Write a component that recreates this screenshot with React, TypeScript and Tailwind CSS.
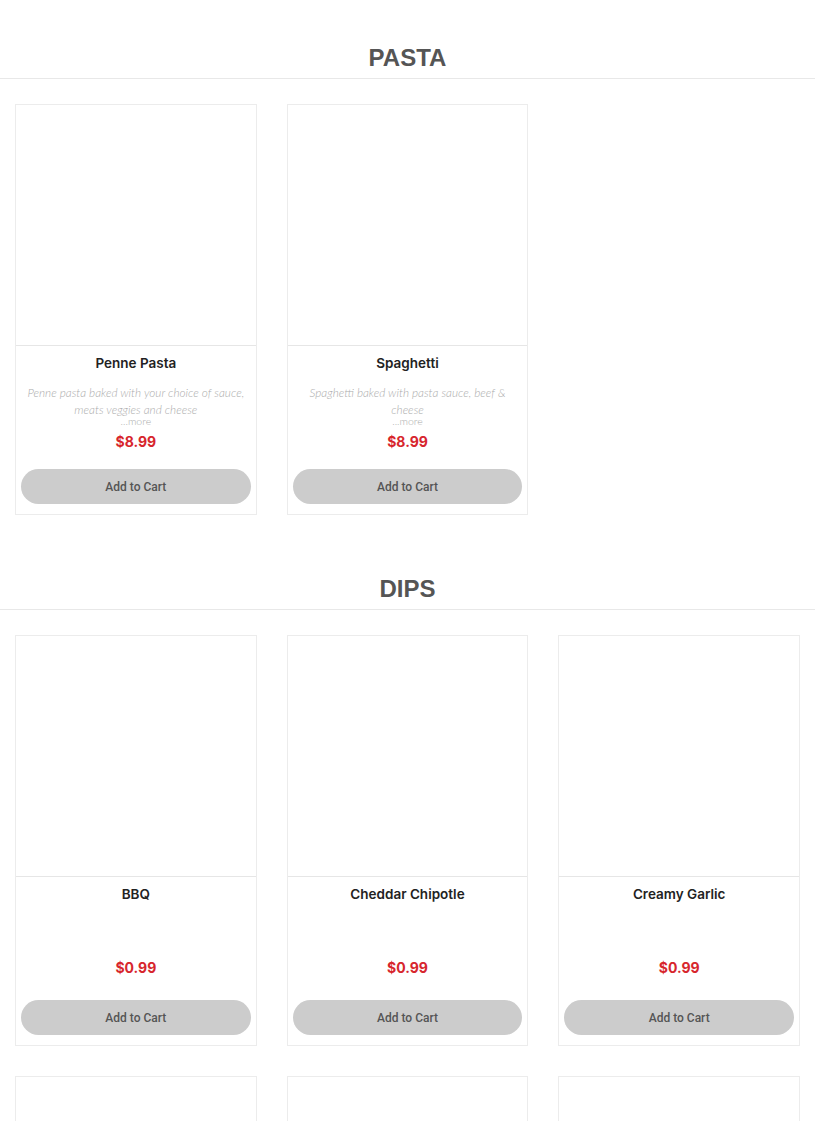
import { FC } from "react";

type Item = {
  name: string;
  price: string;
  description?: string;
};

const pasta: Item[] = [
  {
    name: "Penne Pasta",
    price: "$8.99",
    description: "Penne pasta baked with your choice of sauce, meats veggies and cheese",
  },
  {
    name: "Spaghetti",
    price: "$8.99",
    description: "Spaghetti baked with pasta sauce, beef & cheese",
  },
];

const dips: Item[] = [
  { name: "BBQ", price: "$0.99" },
  { name: "Cheddar Chipotle", price: "$0.99" },
  { name: "Creamy Garlic", price: "$0.99" },
  { name: "", price: "" },
  { name: "", price: "" },
  { name: "", price: "" },
];

const ProductCard: FC<{ item: Item }> = ({ item }) => {
  return (
    <div className="flex h-[411px] flex-col border border-[#ececec] bg-white">
      <div className="h-[241px] border-b border-[#e6e6e6]" />
      <div className="flex flex-1 flex-col items-center px-[5px]">
        <h3 className="mt-[7px] text-center font-['Inter',sans-serif] text-[13.5px] font-semibold leading-[20px] text-[#222]">
          {item.name}
        </h3>
        {item.description ? (
          <div className="flex h-[53px] flex-col items-center px-[5px] pt-[11px] text-center font-['Lato',sans-serif] text-[11.8px] font-light italic leading-[17px] text-[#acacac]">
            <p>{item.description}</p>
            <span className="-mt-[2px] text-[10.5px] not-italic leading-[10px]">...more</span>
          </div>
        ) : (
          <div className="h-[48px]" />
        )}
        <div className="mt-[6px] font-['Inter',sans-serif] text-[14px] font-bold leading-[20px] text-[#d7262d]">
          {item.price}
        </div>
        <button className="mt-auto mb-[10px] h-[35px] w-full rounded-full bg-[#cccccc] font-['Roboto',sans-serif] text-[12px] font-medium text-[#555]">
          Add to Cart
        </button>
      </div>
    </div>
  );
};

const Section: FC<{ title: string; items: Item[] }> = ({ title, items }) => {
  return (
    <section className="pt-[43px]">
      <div className="border-b border-[#e8e8e8] pb-[5px] text-center">
        <h2 className="font-['Liberation_Sans',sans-serif] text-[24px] font-bold leading-[30px] text-[#555]">
          {title}
        </h2>
      </div>
      <div className="grid grid-cols-3 gap-x-[30px] gap-y-[30px] px-[15px] pt-[25px]">
        {items.map((item, i) => (
          <ProductCard key={i} item={item} />
        ))}
      </div>
    </section>
  );
};

export default function App() {
  return (
    <div className="h-[1121px] overflow-hidden bg-white">
      <Section title="PASTA" items={pasta} />
      <div className="h-[16px]" />
      <Section title="DIPS" items={dips} />
    </div>
  );
}
